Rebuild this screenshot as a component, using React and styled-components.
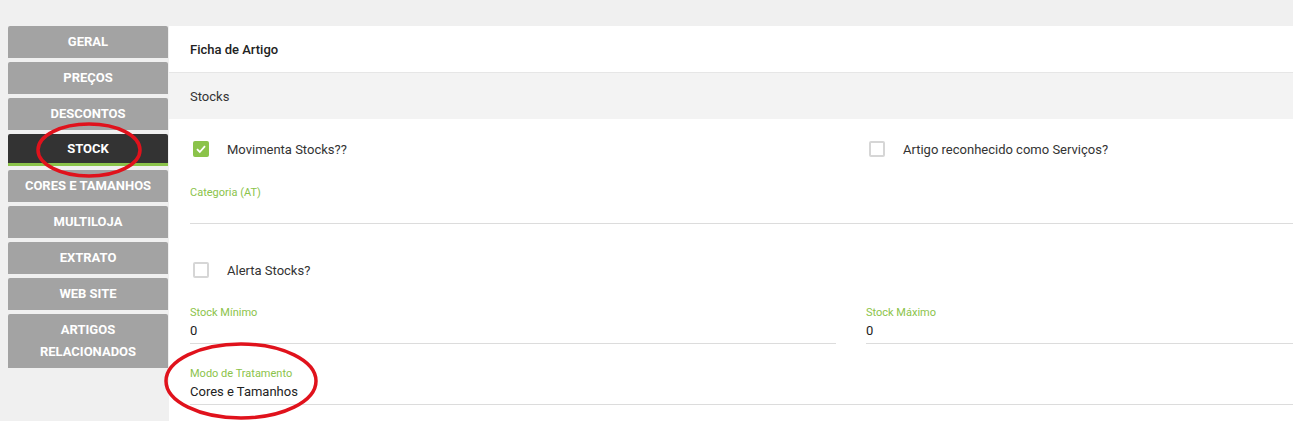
import React from 'react'
import styled, { createGlobalStyle } from 'styled-components'

const tabs = [
  'GERAL',
  'PREÇOS',
  'DESCONTOS',
  'STOCK',
  'CORES E TAMANHOS',
  'MULTILOJA',
  'EXTRATO',
  'WEB SITE',
  'ARTIGOS RELACIONADOS',
]

function Checkbox({ checked }) {
  return (
    <Box checked={checked}>
      {checked && (
        <svg width="12" height="12" viewBox="0 0 12 12">
          <path d="M2 6.2 L4.8 9 L10 3.2" fill="none" stroke="#fff" strokeWidth="1.8" />
        </svg>
      )}
    </Box>
  )
}

function Field({ label, value }) {
  return (
    <FieldWrap>
      <FieldLabel>{label}</FieldLabel>
      <FieldValue>{value}</FieldValue>
    </FieldWrap>
  )
}

function App() {
  return (
    <Page>
      <GlobalStyle />
      <Sidebar>
        {tabs.map((t) => (
          <Tab key={t} active={t === 'STOCK'} tall={t.length > 18}>
            {t === 'ARTIGOS RELACIONADOS' ? (
              <>
                ARTIGOS
                <br />
                RELACIONADOS
              </>
            ) : (
              t
            )}
          </Tab>
        ))}
      </Sidebar>
      <Main>
        <Header>Ficha de Artigo</Header>
        <SectionBar>Stocks</SectionBar>
        <Body>
          <Grid>
            <CheckRow>
              <Checkbox checked />
              <CheckLabel>Movimenta Stocks??</CheckLabel>
            </CheckRow>
            <CheckRow>
              <Checkbox />
              <CheckLabel>Artigo reconhecido como Serviços?</CheckLabel>
            </CheckRow>
          </Grid>
          <Spaced top={27}>
            <Field label="Categoria (AT)" value="" />
          </Spaced>
          <Spaced top={36}>
            <CheckRow>
              <Checkbox />
              <CheckLabel>Alerta Stocks?</CheckLabel>
            </CheckRow>
          </Spaced>
          <Spaced top={26}>
            <Grid>
              <Field label="Stock Mínimo" value="0" />
              <Field label="Stock Máximo" value="0" />
            </Grid>
          </Spaced>
          <Spaced top={23}>
            <Field label="Modo de Tratamento" value="Cores e Tamanhos" />
          </Spaced>
        </Body>
      </Main>
      <Marks width="1293" height="421">
        <ellipse cx="89" cy="150" rx="51" ry="26" fill="none" stroke="#e0121c" strokeWidth="3.5" />
        <ellipse cx="241" cy="381" rx="75" ry="37" fill="none" stroke="#e0121c" strokeWidth="3.5" />
      </Marks>
    </Page>
  )
}

const GlobalStyle = createGlobalStyle`
  body {
    margin: 0;
    background: #f0f0f0;
    font-family: Roboto, "Liberation Sans", Arial, sans-serif;
  }
`

const Page = styled.div`
  position: relative;
  display: flex;
  align-items: flex-start;
  padding: 26px 0 0 8px;
  height: 421px;
  box-sizing: border-box;
  overflow: hidden;
`

const Sidebar = styled.nav`
  width: 160px;
  flex-shrink: 0;
  display: flex;
  flex-direction: column;
  gap: 4px;
`

const Tab = styled.div`
  box-sizing: border-box;
  height: ${(p) => (p.tall ? '54px' : '32px')};
  display: flex;
  align-items: center;
  justify-content: center;
  text-align: center;
  line-height: 22px;
  background: ${(p) => (p.active ? '#333333' : '#a3a3a3')};
  border-bottom: ${(p) => (p.active ? '3px solid #8bc34a' : 'none')};
  color: #fff;
  font-size: 13px;
  font-weight: 700;
  border-radius: 2px 2px 0 0;
`

const Main = styled.main`
  flex: 1;
  margin-left: 1px;
  background: #fff;
  min-height: 395px;
`

const Header = styled.div`
  height: 46px;
  display: flex;
  align-items: center;
  padding-left: 21px;
  font-size: 13px;
  font-weight: 500;
  color: #222;
  border-bottom: 1px solid #e6e6e6;
`

const SectionBar = styled.div`
  height: 46px;
  display: flex;
  align-items: center;
  padding-left: 21px;
  font-size: 13px;
  color: #333;
  background: #f3f3f3;
`

const Body = styled.div`
  padding: 20px 0 0 21px;
`

const Grid = styled.div`
  display: grid;
  grid-template-columns: 646px 1fr;
  column-gap: 30px;
`

const Spaced = styled.div`
  margin-top: ${(p) => p.top}px;
`

const CheckRow = styled.label`
  height: 20px;
  display: flex;
  align-items: center;
  gap: 18px;
  padding-left: 3px;
`

const Box = styled.span`
  box-sizing: border-box;
  width: 16px;
  height: 16px;
  border-radius: 2px;
  display: flex;
  align-items: center;
  justify-content: center;
  background: ${(p) => (p.checked ? '#8bc34a' : '#fff')};
  border: ${(p) => (p.checked ? 'none' : '2px solid #d6d6d6')};
`

const CheckLabel = styled.span`
  font-size: 13px;
  color: #333;
`

const FieldWrap = styled.div`
  border-bottom: 1px solid #dcdcdc;
  padding-bottom: 3px;
`

const FieldLabel = styled.div`
  font-size: 11px;
  line-height: 14px;
  color: #8bc34a;
  margin-bottom: 2px;
`

const FieldValue = styled.div`
  font-size: 13px;
  line-height: 18px;
  height: 18px;
  color: #222;
`

const Marks = styled.svg`
  position: absolute;
  top: 0;
  left: 0;
  pointer-events: none;
`

export default App
